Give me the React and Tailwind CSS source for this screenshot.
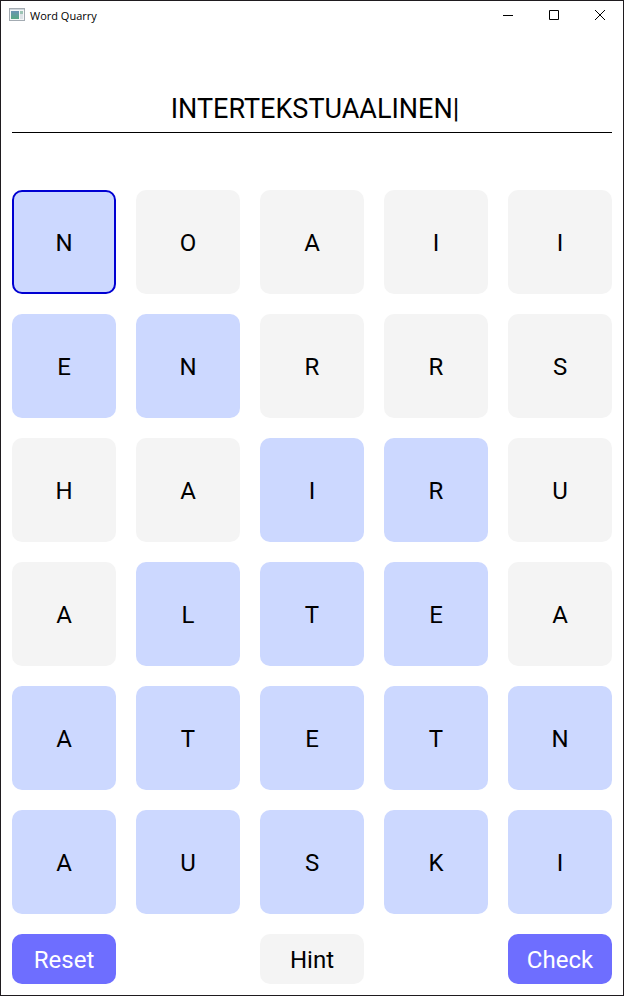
import { useState } from "react";

const ROWS = ["NOAII", "ENRRS", "HAIRU", "ALTEA", "ATETN", "AUSKI"];
const PICKED = ["10000", "11000", "00110", "01110", "11111", "11111"];

function AppIcon() {
  return (
    <svg width="16" height="14" viewBox="0 0 16 14" aria-hidden="true">
      <defs>
        <linearGradient id="pane" x1="0" y1="0" x2="0" y2="1">
          <stop offset="0" stopColor="#6b93b4" />
          <stop offset="1" stopColor="#57a882" />
        </linearGradient>
      </defs>
      <rect x="0.5" y="0.5" width="15" height="12" fill="#f4f6f7" stroke="#a3abb2" />
      <rect x="1" y="1" width="14" height="1" fill="#cfd6dc" />
      <rect x="2" y="3" width="8" height="8" fill="url(#pane)" />
      <rect x="11" y="3" width="3" height="8" fill="#dde3e7" />
      <rect x="11" y="3" width="3" height="3" fill="#9cc4b4" />
    </svg>
  );
}

function WindowButton({ label, children }) {
  return (
    <button type="button" aria-label={label} className="flex h-7 w-[46px] items-center justify-center">
      <svg width="12" height="12" viewBox="0 0 12 12" fill="none" stroke="#000" aria-hidden="true">
        {children}
      </svg>
    </button>
  );
}

function TitleBar() {
  return (
    <header className="flex h-7 items-center justify-between">
      <div className="flex items-center gap-[5px] pl-2">
        <AppIcon />
        <h1 className="pt-px font-['Open_Sans','Noto_Sans',sans-serif] text-[11px] leading-4 text-black">Word Quarry</h1>
      </div>
      <div className="flex">
        <WindowButton label="Minimize">
          <path d="M1 6.5h10" />
        </WindowButton>
        <WindowButton label="Maximize">
          <path d="M1.5 1.5h9v9h-9z" />
        </WindowButton>
        <WindowButton label="Close">
          <path d="M1 1l10 10M11 1L1 11" />
        </WindowButton>
      </div>
    </header>
  );
}

function Tile({ letter, picked, last }) {
  const fill = picked ? "bg-[#ccd8ff]" : "bg-[#f4f4f4]";
  const edge = last ? "border-2 border-[#0000d2]" : "";
  return (
    <button
      type="button"
      aria-pressed={picked}
      className={`flex aspect-square items-center justify-center rounded-[10px] pt-[2px] text-2xl text-black ${fill} ${edge}`}
    >
      {letter}
    </button>
  );
}

export default function App() {
  const [word, setWord] = useState("INTERTEKSTUAALINEN|");
  return (
    <div className="min-h-screen border border-[#1f1b1f] bg-white font-[Roboto,sans-serif]">
      <TitleBar />
      <main className="px-[11px] pt-[50px] pb-[11px]">
        <input
          type="text"
          aria-label="Word"
          value={word}
          onChange={(e) => setWord(e.target.value)}
          className="block h-[54px] w-full border-b border-black bg-transparent pt-[7px] pl-[6px] text-center text-[27px] text-black outline-none"
        />
        <div className="mt-[57px] grid grid-cols-5 gap-5">
          {ROWS.map((row, r) =>
            [...row].map((letter, c) => (
              <Tile
                key={`${r}-${c}`}
                letter={letter}
                picked={PICKED[r][c] === "1"}
                last={r === 0 && c === 0}
              />
            ))
          )}
        </div>
        <div className="mt-5 grid grid-cols-5 gap-5">
          <button type="button" className="h-[50px] rounded-[10px] bg-[#6e6eff] pt-[2px] text-2xl text-white">Reset</button>
          <button type="button" className="col-start-3 h-[50px] rounded-[10px] bg-[#f4f4f4] pt-[2px] text-2xl text-black">Hint</button>
          <button type="button" className="col-start-5 h-[50px] rounded-[10px] bg-[#6e6eff] pt-[2px] text-2xl text-white">Check</button>
        </div>
      </main>
    </div>
  );
}
